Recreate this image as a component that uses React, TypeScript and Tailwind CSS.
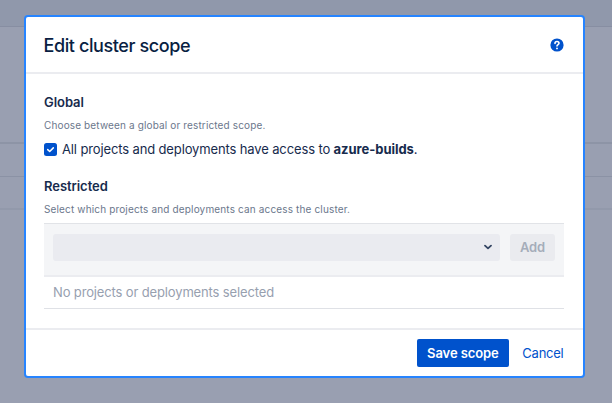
export default function App() {
  return (
    <div className="relative h-[403px] w-[612px] overflow-hidden bg-[#999fb1] font-['Inter',sans-serif] text-[#172b4d]">
      <div className="flex h-full flex-col">
        <div className="h-[27px] border-b border-[#878ea2] bg-[#9098ab]" />
        <div className="h-[117px] border-b-2 border-[#8d94a6]" />
        <div className="h-[33px] border-b border-[#8b92a5]" />
        <div className="h-[33px] border-b-2 border-[#9299ab]" />
      </div>
      <section
        role="dialog"
        className="absolute left-[23.5px] top-[15px] flex h-[363px] w-[561.5px] flex-col rounded-[4px] border-2 border-[#2684ff] bg-white"
      >
        <header className="flex h-[57px] shrink-0 items-center justify-between border-b-2 border-[#ebecf0] pl-[18px] pr-[19px]">
          <h1 className="mt-0.5 text-[18px] font-medium leading-6 tracking-[-0.4px] text-[#091e42]">Edit cluster scope</h1>
          <svg className="size-[14px]" viewBox="0 0 14 14" fill="none">
            <circle cx="7" cy="7" r="6.6" fill="#0052cc" />
            <path d="M5 5.4c0-1.1.9-1.9 2-1.9s2 .8 2 1.8c0 1.2-2 1.4-2 2.7" stroke="#fff" strokeWidth="1.6" strokeLinecap="round" />
            <circle cx="7" cy="10.4" r=".95" fill="#fff" />
          </svg>
        </header>
        <main className="flex h-[254px] shrink-0 flex-col pl-[18.5px] pr-[19px] pt-[20px]">
          <h2 className="text-[13px] font-semibold leading-4 tracking-[-0.05px]">Global</h2>
          <p className="mt-[9px] text-[10px] leading-3 tracking-[0.14px] text-[#6b778c]">
            Choose between a global or restricted scope.
          </p>
          <label className="mt-[10px] flex h-4 items-center text-[13px] tracking-[-0.13px]">
            <svg className="mr-[5px] size-[13px]" viewBox="0 0 13 13" fill="none">
              <rect width="13" height="13" rx="2.5" fill="#0052cc" />
              <path d="M3.7 6.6 5.7 8.5 9.3 4.9" stroke="#fff" strokeWidth="1.5" strokeLinecap="round" strokeLinejoin="round" />
            </svg>
            <span className="mt-0.5">
              All projects and deployments have access to <strong className="font-bold tracking-[-0.04px]">azure-builds</strong>.
            </span>
          </label>
          <h2 className="mt-[21px] text-[13px] font-semibold leading-4 tracking-[-0.05px]">Restricted</h2>
          <p className="mt-[9px] text-[10px] leading-3 tracking-[0.15px] text-[#6b778c]">
            Select which projects and deployments can access the cluster.
          </p>
          <div className="mt-[8px] flex h-[54px] shrink-0 items-start gap-[10px] border-b-2 border-t border-b-[#ebecf0] border-t-[#e1e3e7] bg-[#f4f5f7] px-[9px] pt-[9.5px]">
            <div className="flex h-[27.5px] flex-1 items-center justify-end rounded-[3px] bg-[#eaebf0] pr-[8px]">
              <svg className="size-[8px]" viewBox="0 0 8 8" fill="none">
                <path d="M1 2.6 4 5.4 7 2.6" stroke="#344563" strokeWidth="1.8" strokeLinecap="round" strokeLinejoin="round" />
              </svg>
            </div>
            <button className="h-[27.5px] w-[45px] rounded-[3px] bg-[#eaebef] text-[13px] font-semibold tracking-[-0.1px] text-[#a5adba]">Add</button>
          </div>
          <div className="flex h-[32px] shrink-0 items-center border-b border-[#dfe1e6] pl-[9px] text-[13px] tracking-[-0.14px] text-[#97a0af]">
            No projects or deployments selected
          </div>
        </main>
        <footer className="flex flex-1 items-start justify-end gap-[13px] border-t-2 border-[#ebecf0] pr-[19.5px] pt-[9px] text-[13px]">
          <button className="h-[28px] w-[92px] rounded-[2px] bg-[#0052cc] pr-px pt-0.5 font-semibold tracking-[-0.1px] text-white">Save scope</button>
          <button className="h-[28px] pt-0.5 tracking-[-0.25px] text-[#0052cc]">Cancel</button>
        </footer>
      </section>
    </div>
  );
}
